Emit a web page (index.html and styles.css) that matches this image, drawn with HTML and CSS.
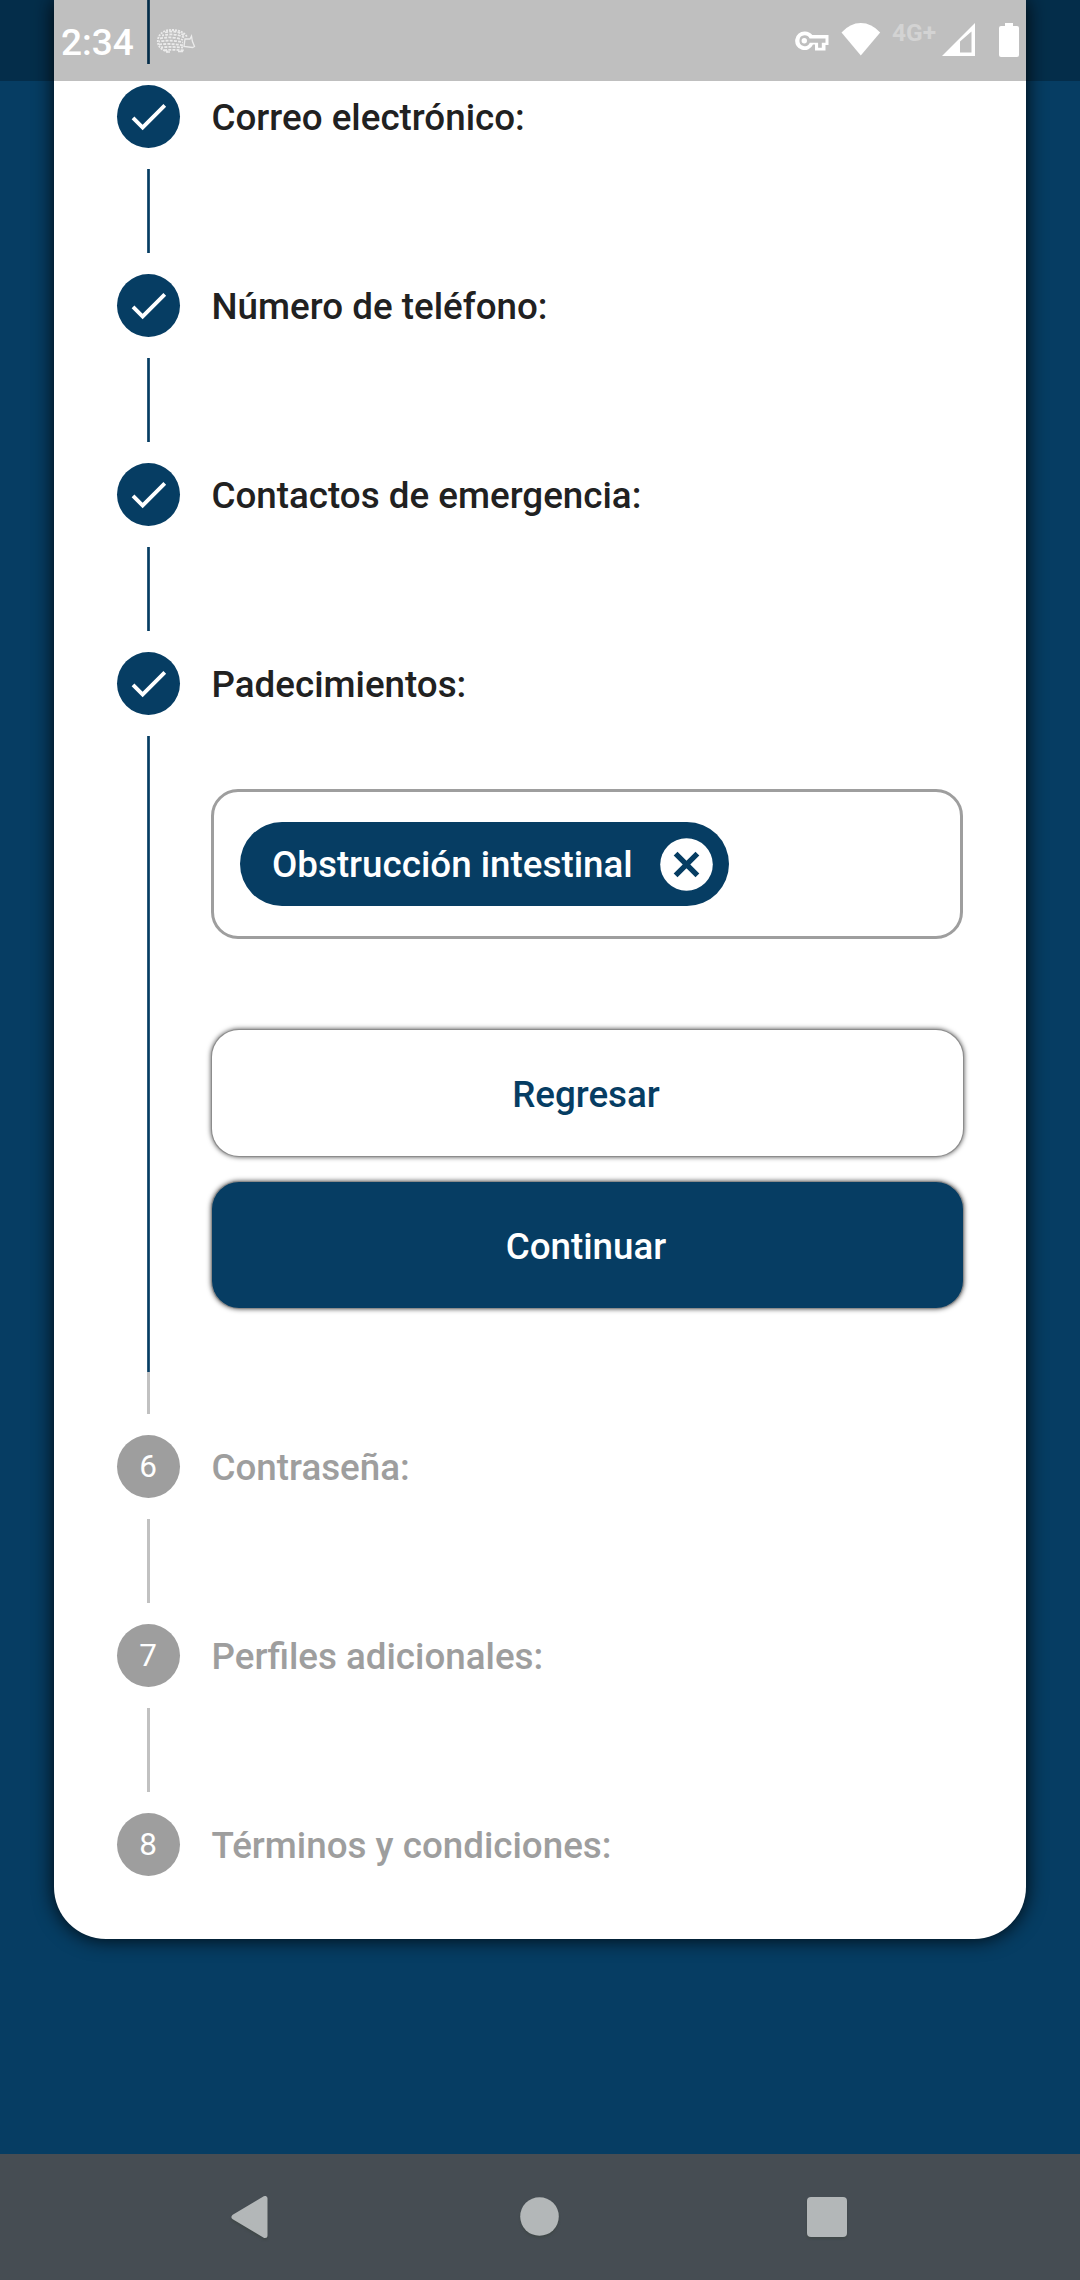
FILE: index.html
```html
<!DOCTYPE html>
<html lang="es">
<head>
<meta charset="utf-8">
<title>Registro</title>
<link rel="stylesheet" href="styles.css">
</head>
<body>
<div class="screen">
  <main class="page">
    <section class="card">
      <div class="rail rail-top"></div>

      <div class="step">
        <span class="dot"><svg class="check" viewBox="0 0 24 24"><path d="M9 16.2 4.8 12l-1.4 1.4L9 19 21 7l-1.4-1.4z"/></svg></span>
        <h2 class="title">Correo electrónico:</h2>
      </div>
      <div class="rail"></div>

      <div class="step">
        <span class="dot"><svg class="check" viewBox="0 0 24 24"><path d="M9 16.2 4.8 12l-1.4 1.4L9 19 21 7l-1.4-1.4z"/></svg></span>
        <h2 class="title">Número de teléfono:</h2>
      </div>
      <div class="rail"></div>

      <div class="step">
        <span class="dot"><svg class="check" viewBox="0 0 24 24"><path d="M9 16.2 4.8 12l-1.4 1.4L9 19 21 7l-1.4-1.4z"/></svg></span>
        <h2 class="title">Contactos de emergencia:</h2>
      </div>
      <div class="rail"></div>

      <div class="step">
        <span class="dot"><svg class="check" viewBox="0 0 24 24"><path d="M9 16.2 4.8 12l-1.4 1.4L9 19 21 7l-1.4-1.4z"/></svg></span>
        <h2 class="title">Padecimientos:</h2>
      </div>
      <div class="content">
        <div class="rail rail-fill"></div>
        <div class="form">
          <div class="chips">
            <div class="chip">
              <span class="chip-label">Obstrucción intestinal</span>
              <svg class="chip-close" viewBox="0 0 53 53"><circle cx="26.5" cy="26.5" r="26.3" fill="#fff"/><path d="M15.6 15.6 37.4 37.4M37.4 15.6 15.6 37.4" stroke="#063d63" stroke-width="5.4"/></svg>
            </div>
          </div>
          <button class="button back">Regresar</button>
          <button class="button next">Continuar</button>
        </div>
      </div>
      <div class="rail rail-short pending"></div>

      <div class="step pending">
        <span class="dot">6</span>
        <h2 class="title">Contraseña:</h2>
      </div>
      <div class="rail pending"></div>

      <div class="step pending">
        <span class="dot">7</span>
        <h2 class="title">Perfiles adicionales:</h2>
      </div>
      <div class="rail pending"></div>

      <div class="step pending">
        <span class="dot">8</span>
        <h2 class="title">Términos y condiciones:</h2>
      </div>
    </section>
  </main>

  <nav class="navbar">
    <svg class="nav-icon" viewBox="0 0 50 50"><path d="M9 25 40 6.500V43.500Z" fill="#b3b7b8" stroke="#b3b7b8" stroke-width="5" stroke-linejoin="round"/></svg>
    <svg class="nav-icon" viewBox="0 0 50 50"><circle cx="25.500" cy="24.500" r="19.300" fill="#b3b7b8"/></svg>
    <svg class="nav-icon" viewBox="0 0 50 50"><rect x="5" y="5" width="40" height="40" rx="4" fill="#b3b7b8"/></svg>
  </nav>

  <header class="statusbar">
    <span class="clock">2:34</span>
    <svg class="hedgehog" viewBox="0 0 40 26" fill="none" stroke="#ebebeb" stroke-width="1.800">
      <path d="M12 23.500C4 22 1 17 2 11 4 4 10 1.500 17 2c7 0 12 3 14 7" stroke-dasharray="2 1"/>
      <g stroke-dasharray="3 1.200">
        <path d="M9 4.500c8-2 14-1 19 3"/>
        <path d="M6 7.500c9-2 17-1 22 2" stroke-dashoffset="1"/>
        <path d="M4 10.500c9-2 17-1 23 1.500"/>
        <path d="M3 13.500c9-1.500 17-1 24 1" stroke-dashoffset="2"/>
        <path d="M3 16.500c8-1 16-.5 24 .8"/>
        <path d="M5 19.500c8-1 15-.5 22 0" stroke-dashoffset="1"/>
        <path d="M8 22.300c7-.8 13-.5 20 .2"/>
      </g>
      <path d="M29 11h5l1.500-3 .8 5 2.200 5.500-2 1-8.500-1zM10 24h4M22 23.500h5" stroke-width="1.300"/>
    </svg>
    <span class="spacer"></span>
    <svg class="key" viewBox="0 0 34 20"><path d="M9.500 .5a9.300 9.300 0 1 0 8.500 13H20v6h10.500V14H33.500V4H17.300A9.300 9.300 0 0 0 9.500 .5z" fill="#fff"/><path d="M9.500 4.300a5.400 5.400 0 1 0 5.300 7.500h8.300v5h3.700v-5h3.700V7.500H14.600A5.400 5.400 0 0 0 9.500 4.300z" fill="#bfbfbf"/><circle cx="9.300" cy="9.700" r="2.700" fill="#fff"/></svg>
    <svg class="wifi" viewBox="0 0 40 33"><path d="M.5 9.500Q9 0 19.800 0T39.200 9.500L19.800 32.500z" fill="#fff"/></svg>
    <span class="network">4G+</span>
    <svg class="signal" viewBox="0 0 33 33"><path fill-rule="evenodd" d="M0 33 33 0V33zM18 29.500h11.500V8.500L18 18.500z" fill="#fff"/></svg>
    <svg class="battery" viewBox="0 0 20 34"><path d="M6 0h8v3h4a2 2 0 0 1 2 2v27a2 2 0 0 1-2 2H2a2 2 0 0 1-2-2V5a2 2 0 0 1 2-2h4z" fill="#fff"/></svg>
  </header>
</div>
</body>
</html>
```
FILE: styles.css
```css
* {
  box-sizing: border-box;
}

body {
  margin: 0;
  font-family: Roboto, "Noto Sans", sans-serif;
}

.screen {
  position: relative;
  display: flex;
  flex-direction: column;
  width: 1080px;
  height: 2280px;
  overflow: hidden;
  background: #063d63;
}

.page {
  flex: 1;
  padding: 0 54px;
}

.card {
  padding: 0 63px 42px;
  background: #fff;
  border-radius: 0 0 52px 52px;
  box-shadow: 0 0 20px rgba(0, 0, 0, 0.9);
}

.step {
  display: flex;
  align-items: center;
  gap: 31.5px;
  height: 105px;
}

.dot {
  display: flex;
  align-items: center;
  justify-content: center;
  width: 63px;
  height: 63px;
  border-radius: 50%;
  background: #063d63;
  color: #fff;
  font-size: 31.5px;
}

.check {
  width: 47px;
  height: 47px;
  fill: #fff;
}

.title {
  margin: 0;
  padding-top: 2px;
  font-size: 36.75px;
  font-weight: 500;
  line-height: 44px;
  white-space: nowrap;
  color: #212121;
}

.rail {
  width: 3px;
  height: 84px;
  margin-left: 30px;
  background: linear-gradient(90deg, #2b5a7a 1px, #063d63 1px 2px, #2b5a7a 2px);
}

.rail-top {
  height: 64px;
}

.rail-short {
  height: 42px;
}

.rail.pending {
  background: #c1c1c1;
}

.pending .dot {
  padding-right: 1px;
  background: #9e9e9e;
}

.pending .title {
  color: #9e9e9e;
}

.content {
  display: flex;
  gap: 61px;
  height: 636px;
}

.rail-fill {
  height: 636px;
}

.form {
  display: flex;
  flex-direction: column;
  width: 752px;
  padding-top: 53px;
}

.chips {
  height: 150px;
  padding: 30px 26px;
  border: 3px solid #9e9e9e;
  border-radius: 27px;
}

.chip {
  display: inline-flex;
  align-items: center;
  justify-content: space-between;
  width: 489px;
  height: 84px;
  padding: 0 16px 0 32px;
  border-radius: 42px;
  background: #063d63;
}

.chip-label {
  font-size: 36.75px;
  font-weight: 500;
  color: #fff;
  white-space: nowrap;
}

.chip-close {
  width: 53px;
  height: 53px;
}

.button {
  height: 126px;
  margin-left: 1px;
  padding: 2px 3px 0 0;
  border: 0;
  border-radius: 27px;
  font: 500 36.75px Roboto, "Noto Sans", sans-serif;
  box-shadow: 0 0 0 1px #8c8c8c, 0 0 5px 1px rgba(0, 0, 0, 0.7);
}

.back {
  margin-top: 91px;
  background: #fff;
  color: #063d63;
}

.next {
  margin-top: 26px;
  background: #063d63;
  color: #fff;
}

.navbar {
  display: flex;
  align-items: center;
  justify-content: space-between;
  height: 126px;
  padding: 0 228px 0 225px;
  background: #464d53;
}

.nav-icon {
  width: 50px;
  height: 50px;
  filter: drop-shadow(0 2px 1px rgba(60, 68, 66, 0.7));
}

/* Translucent system bar over the scrolled card */
.statusbar {
  position: absolute;
  inset: 0 0 auto;
  display: flex;
  align-items: flex-start;
  height: 81px;
  padding: 0 61px 0 61px;
  background: rgba(0, 0, 0, 0.25);
}

.clock {
  width: 95px;
  padding-top: 20px;
  font-size: 37px;
  font-weight: 500;
  line-height: 45px;
  color: #fff;
}

.hedgehog {
  width: 40px;
  height: 26px;
  margin-top: 28px;
}

.spacer {
  flex: 1;
}

.key {
  width: 34px;
  height: 20px;
  margin: 31px 12px 0 0;
}

.wifi {
  width: 40px;
  height: 33px;
  margin: 23px 11px 0 0;
}

.network {
  width: 50px;
  padding-top: 19px;
  font-size: 24.5px;
  font-weight: 700;
  line-height: 28px;
  color: #d3d3d3;
}

.signal {
  width: 33px;
  height: 33px;
  margin: 23px 24px 0 0;
}

.battery {
  width: 20px;
  height: 34px;
  margin-top: 23px;
}
```
